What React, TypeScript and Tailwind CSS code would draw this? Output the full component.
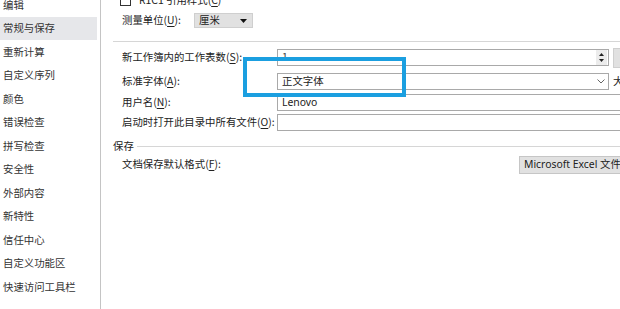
import React from "react";

const items = [
  "编辑",
  "常规与保存",
  "重新计算",
  "自定义序列",
  "颜色",
  "错误检查",
  "拼写检查",
  "安全性",
  "外部内容",
  "新特性",
  "信任中心",
  "自定义功能区",
  "快速访问工具栏",
];

function L({ pre, k, post = "):" }: { pre: string; k: string; post?: string }) {
  return (
    <span>
      {pre}(<span className="underline underline-offset-2">{k}</span>{post}
    </span>
  );
}

export default function App() {
  return (
    <div className="relative flex w-[620px] h-[309px] overflow-hidden bg-white text-[10.4px] leading-none text-[#222] font-['Noto_Sans_CJK_SC','Noto_Sans',sans-serif]">
      {/* Sidebar */}
      <div className="w-[101px] shrink-0 border-r border-[#c4c4c4] flex flex-col">
        <div className="-mt-[7px] flex flex-col">
          {items.map((t, i) => (
            <div
              key={t}
              className={
                i === 1
                  ? "h-[23.5px] flex items-center pl-[3px] mr-[3px] bg-[#e6e7ea] text-[#333]"
                  : "h-[23.5px] flex items-center pl-[3px] mr-[3px] text-[#333]"
              }
            >
              {t}
            </div>
          ))}
        </div>
      </div>

      {/* Main */}
      <div className="flex-1 min-w-0 pl-[12px] flex flex-col">
        {/* checkbox row */}
        <div className="-mt-[6px] h-[12px] ml-[7px] flex items-center gap-[8px] whitespace-nowrap">
          <div className="w-[11px] h-[11px] border border-[#333] bg-white" />
          <L pre="R1C1 引用样式" k="C" post=")" />
        </div>
        {/* measure unit */}
        <div className="mt-[7px] h-[15px] ml-[9px] flex items-center whitespace-nowrap">
          <div className="w-[72px]">
            <L pre="测量单位" k="U" />
          </div>
          <div className="w-[59px] h-[15px] bg-[#e1e1e1] border border-[#cfcfcf] flex items-center justify-between pl-[4px] pr-[5px]">
            <span>厘米</span>
            <svg width="7" height="4" viewBox="0 0 7 4">
              <path d="M0 0 L7 0 L3.5 4 Z" fill="#111" />
            </svg>
          </div>
        </div>
        {/* divider */}
        <div className="mt-[13px] h-px bg-[#d6d6d6] w-[600px]" />

        {/* rows */}
        <div className="mt-[7px] h-[17px] ml-[9px] flex items-center whitespace-nowrap">
          <div className="w-[155px] shrink-0">
            <L pre="新工作簿内的工作表数" k="S" />
          </div>
          <div className="w-[332px] shrink-0 h-[17px] border border-[#a9a9a9] flex items-center justify-between pl-[4px]">
            <span className="text-[#444]">1</span>
            <div className="w-[11px] h-[15px] bg-[#ececec] flex flex-col items-center justify-center gap-[3px] mr-[1px]">
              <svg width="5" height="3" viewBox="0 0 5 3">
                <path d="M0 3 L5 3 L2.5 0 Z" fill="#222" />
              </svg>
              <svg width="5" height="3" viewBox="0 0 5 3">
                <path d="M0 0 L5 0 L2.5 3 Z" fill="#222" />
              </svg>
            </div>
          </div>
          <div className="ml-[4px] w-[30px] shrink-0 h-[20px] bg-[#e1e1e1] border border-[#cfcfcf]" />
        </div>

        <div className="mt-[7px] h-[17px] ml-[9px] flex items-center whitespace-nowrap">
          <div className="w-[155px] shrink-0">
            <L pre="标准字体" k="A" />
          </div>
          <div className="w-[332px] shrink-0 h-[17px] border border-[#a9a9a9] flex items-center justify-between pl-[4px] pr-[3px]">
            <span>正文字体</span>
            <svg width="8" height="5" viewBox="0 0 8 5">
              <path d="M0.5 0.5 L4 4 L7.5 0.5" fill="none" stroke="#666" strokeWidth="1" />
            </svg>
          </div>
          <span className="ml-[4px]">大</span>
        </div>

        <div className="mt-[4px] h-[17px] ml-[9px] flex items-center whitespace-nowrap">
          <div className="w-[155px] shrink-0">
            <L pre="用户名" k="N" />
          </div>
          <div className="w-[400px] shrink-0 h-[17px] border border-[#a9a9a9] flex items-center pl-[4px] font-['Noto_Sans',sans-serif]">
            Lenovo
          </div>
        </div>

        <div className="mt-[3px] h-[17px] ml-[9px] flex items-center whitespace-nowrap">
          <div className="w-[155px] shrink-0">
            <L pre="启动时打开此目录中所有文件" k="O" />
          </div>
          <div className="w-[400px] shrink-0 h-[17px] border border-[#a9a9a9]" />
        </div>

        {/* group header */}
        <div className="mt-[9px] h-[13px] flex items-center gap-[3px] whitespace-nowrap">
          <span>保存</span>
          <div className="h-px w-[500px] shrink-0 bg-[#d6d6d6]" />
        </div>

        <div className="mt-[3px] h-[17px] ml-[9px] flex items-center whitespace-nowrap">
          <div className="w-[397px] shrink-0">
            <L pre="文档保存默认格式" k="F" />
          </div>
          <div className="w-[160px] shrink-0 h-[18px] bg-[#e1e1e1] border border-[#c6c6c6] flex items-center pl-[4px] font-['Noto_Sans','Noto_Sans_CJK_SC',sans-serif]">
            Microsoft Excel 文件
          </div>
        </div>
      </div>

      {/* highlight rectangle */}
      <div className="absolute left-[243px] top-[57px] w-[163px] h-[40px] border-[4px] border-[#1b9fe0]" />
    </div>
  );
}
